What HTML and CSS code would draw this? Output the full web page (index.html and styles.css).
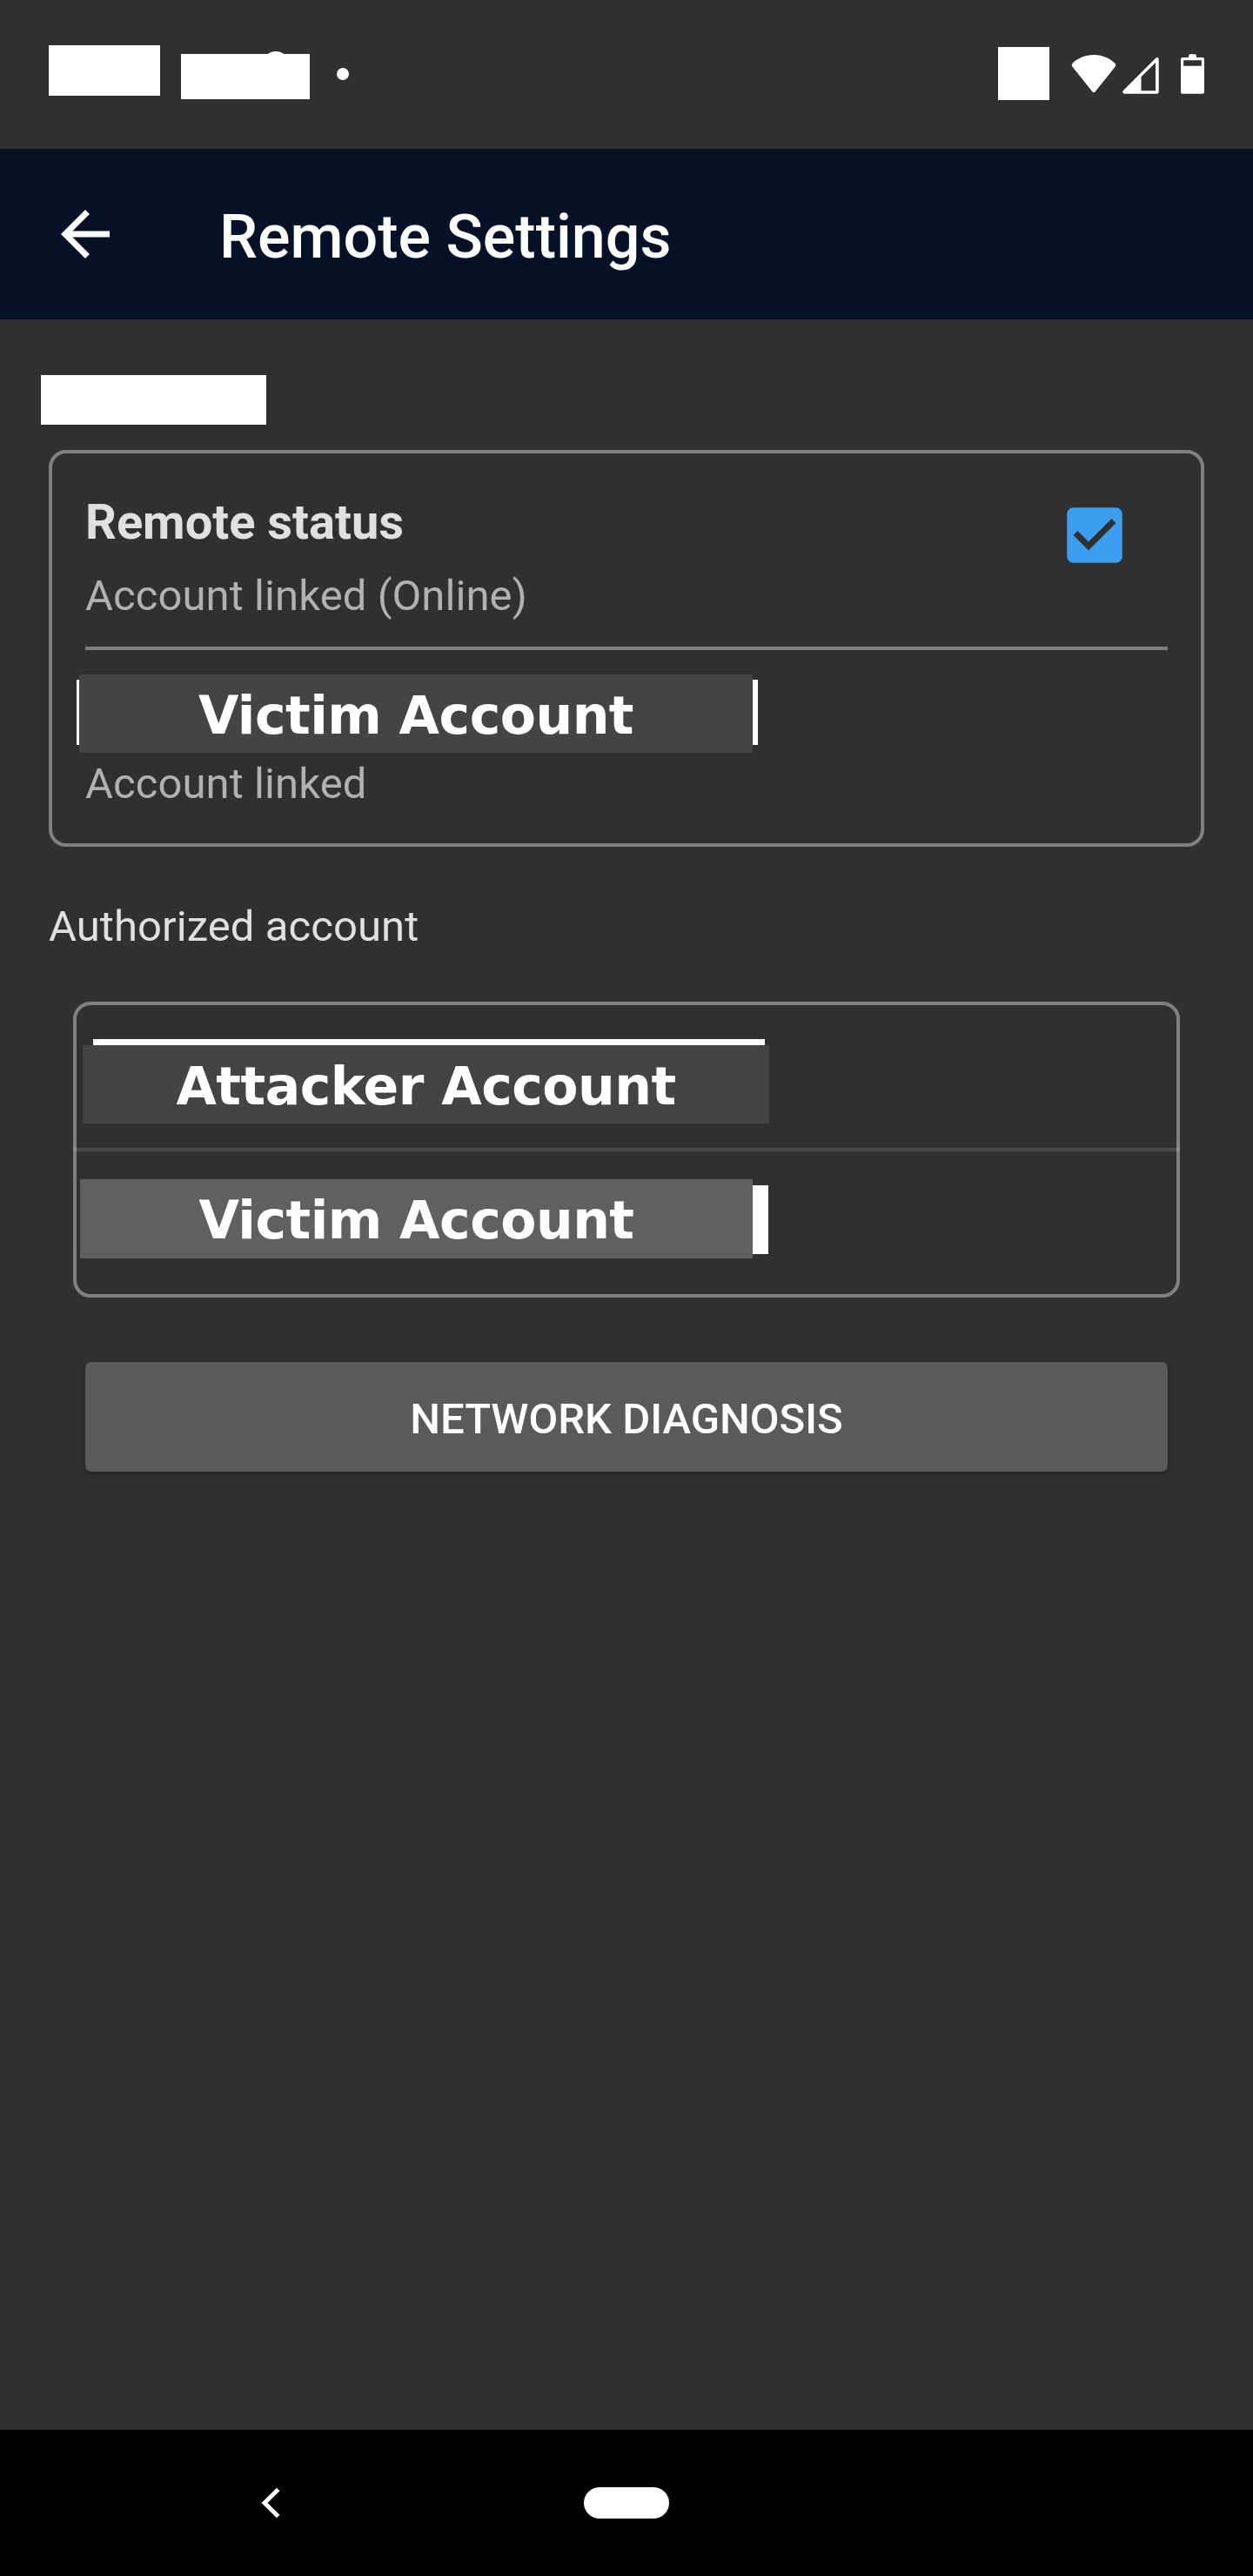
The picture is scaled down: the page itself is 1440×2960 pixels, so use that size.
FILE: index.html
```html
<!DOCTYPE html>
<html lang="en">
<head>
<meta charset="utf-8">
<title>Remote Settings</title>
<link rel="stylesheet" href="styles.css">
</head>
<body>
<div class="screen">
  <div class="status-bar">
    <span class="mask mask-time"></span>
    <span class="mask mask-notices"><svg class="notice-arc" width="32" height="32" viewBox="0 0 32 32"><circle cx="16" cy="16" r="16" fill="#fff"/></svg></span>
    <span class="notice-dot"></span>
    <span class="mask mask-network"></span>
    <svg class="wifi" width="52" height="46" viewBox="0 0 52 46"><path fill="#fff" d="M26 2C16.500 2 8 5.700 1.800 11.400Q-.2 13.500 1.500 15.800L24.300 44.300Q26 46 27.700 44.300L50.500 15.800Q52.200 13.500 50.200 11.400C44 5.700 35.500 2 26 2Z"/></svg>
    <svg class="signal" width="42" height="42" viewBox="0 0 42 42"><path fill="#fff" fill-rule="evenodd" d="M38 .9Q41.500-1.300 41.700 2.500V39.500Q41.700 41.700 39.500 41.700H2.500Q-1.300 41.500.9 38ZM38 6L21.500 22.300V38.300H38Z"/></svg>
    <svg class="battery" width="27" height="46" viewBox="0 0 27 46"><path fill="#fff" fill-rule="evenodd" d="M9 4V2Q9 .2 11 .2H16Q18 .2 18 2V4H25Q27 4 27 6V43.700Q27 45.700 25 45.700H2Q0 45.700 0 43.700V6Q0 4 2 4ZM3.200 7.300V13.800H23.800V7.300Z"/></svg>
  </div>
  <header class="app-bar">
    <svg class="back" width="84" height="84" viewBox="0 0 24 24"><path fill="#fff" d="M20 11H7.830l5.590-5.590L12 4l-8 8 8 8 1.410-1.410L7.830 13H20z"/></svg>
    <h1 class="title">Remote Settings</h1>
  </header>
  <main class="content">
    <div class="mask mask-device"></div>
    <section class="card status-card">
      <div class="status-row">
        <div>
          <div class="heading">Remote status</div>
          <div class="note">Account linked (Online)</div>
        </div>
        <svg class="checkbox" width="84" height="84" viewBox="0 0 24 24"><path fill="#3c9eee" fill-rule="evenodd" d="M19 2.930H5c-1.110 0-2.070.96-2.070 2.070v14c0 1.110.96 2.070 2.070 2.070h14c1.110 0 2.070-.96 2.070-2.070V5c0-1.110-.96-2.070-2.070-2.070zM10 17l-5-5 1.410-1.410L10 14.170l7.590-7.590L19 8z"/></svg>
      </div>
      <div class="label label-linked">Victim Account</div>
      <div class="note note-linked">Account linked</div>
    </section>
    <h2 class="section-title">Authorized account</h2>
    <section class="card account-card">
      <div class="label label-attacker">Attacker Account</div>
      <div class="divider"></div>
      <div class="label label-victim">Victim Account</div>
    </section>
    <button class="diagnosis">NETWORK DIAGNOSIS</button>
  </main>
  <nav class="nav-bar">
    <svg class="nav-back" width="22" height="36" viewBox="0 0 22 36"><path fill="none" stroke="#fff" stroke-width="5" d="M19.700 2.400L4 18L19.700 33.600"/></svg>
    <span class="home-pill"></span>
  </nav>
</div>
</body>
</html>
```
FILE: styles.css
```css
* { box-sizing: border-box; }

body {
  margin: 0;
  background: #303030;
  font-family: Roboto, sans-serif;
  color: #e0e0e0;
}

svg { display: block; flex: none; }

.screen {
  display: flex;
  flex-direction: column;
  width: 1440px;
  height: 2960px;
  overflow: hidden;
}

.mask { display: block; background: #fff; }

/* status bar */
.status-bar {
  display: flex;
  align-items: flex-start;
  height: 171px;
  padding: 52px 56px 0;
}
.mask-time { width: 128px; height: 58px; }
.mask-notices { position: relative; width: 148px; height: 52px; margin: 10px 0 0 24px; }
.notice-arc { position: absolute; left: 93px; top: -3px; }
.notice-dot { width: 14px; height: 14px; margin: 26px 0 0 31px; border-radius: 50%; background: #fff; }
.mask-network { width: 59px; height: 61px; margin: 2px 0 0 auto; }
.wifi { margin: 9px 0 0 24.500px; }
.signal { margin: 14px 0 0 7.500px; }
.battery { margin: 10px 0 0 25px; }

/* title bar */
.app-bar {
  display: flex;
  align-items: center;
  height: 196px;
  padding-left: 56px;
  background: #051127;
}
.title {
  margin: 0;
  padding: 6px 0 0 112px;
  font-size: 70px;
  line-height: 84px;
  font-weight: 500;
  color: #fff;
}

/* content */
.content {
  display: flex;
  flex-direction: column;
  flex: 1;
  padding: 64px 56px 0;
}
.mask-device { width: 259px; height: 57px; margin-left: -9px; }
.card { border: 4px solid #808080; border-radius: 20px; }

.status-card { height: 456px; margin-top: 29px; padding: 47px 38px 0; }
.status-row {
  display: flex;
  justify-content: space-between;
  height: 179px;
  padding-right: 42px;
  border-bottom: 4px solid #808080;
}
.checkbox { margin-top: 5px; }
.heading { font-size: 56px; line-height: 64px; font-weight: 700; }
.note {
  margin-top: 24px;
  font-size: 49px;
  line-height: 58px;
  letter-spacing: .08px;
  color: #b1b1b1;
}
.note-linked { margin-top: 7px; }

.label {
  height: 90px;
  padding-top: 2px;
  background: #444;
  font: 700 60px/90px "DejaVu Sans", sans-serif;
  letter-spacing: -.5px;
  text-align: center;
  color: #fff;
}
.label-linked {
  position: relative;
  width: 774px;
  margin: 28px 0 0 -7px;
}
.label-linked::before,
.label-linked::after {
  content: "";
  position: absolute;
  top: 6px;
  height: 75px;
  background: #fff;
}
.label-linked::before { left: -3px; width: 3px; }
.label-linked::after { left: 100%; width: 6px; }

.section-title {
  margin: 63px 0 0;
  font-size: 49px;
  line-height: 58px;
  letter-spacing: .08px;
  font-weight: 400;
}

.account-card { height: 340px; margin: 57px 28px 0; padding-top: 46px; }
.label-attacker { position: relative; width: 789px; margin-left: 7px; }
.label-attacker::before {
  content: "";
  position: absolute;
  left: 12px;
  top: -7px;
  width: 772px;
  height: 7px;
  background: #fff;
}
.divider { position: relative; height: 4px; margin: 28px -4px 0; background: rgba(255, 255, 255, .12); }
.label-victim {
  position: relative;
  width: 773px;
  height: 91px;
  margin: 32px 0 0 4px;
  background: #606060;
  line-height: 91px;
}
.label-victim::after {
  content: "";
  position: absolute;
  left: 100%;
  top: 7px;
  width: 18px;
  height: 79px;
  background: #fff;
}

.diagnosis {
  height: 126px;
  margin: 74px 42px 0;
  padding: 6px 0 0;
  border: 0;
  border-radius: 7px;
  background: #5a5a5c;
  box-shadow: 0 3px 7px rgba(0, 0, 0, .28);
  font: 500 49px/58px Roboto, sans-serif;
  color: #fff;
}

/* navigation bar */
.nav-bar {
  display: flex;
  align-items: center;
  height: 168px;
  padding-left: 300px;
  background: #000;
}
.home-pill { width: 98px; height: 36px; margin-left: 349px; border-radius: 18px; background: #fff; }
```
